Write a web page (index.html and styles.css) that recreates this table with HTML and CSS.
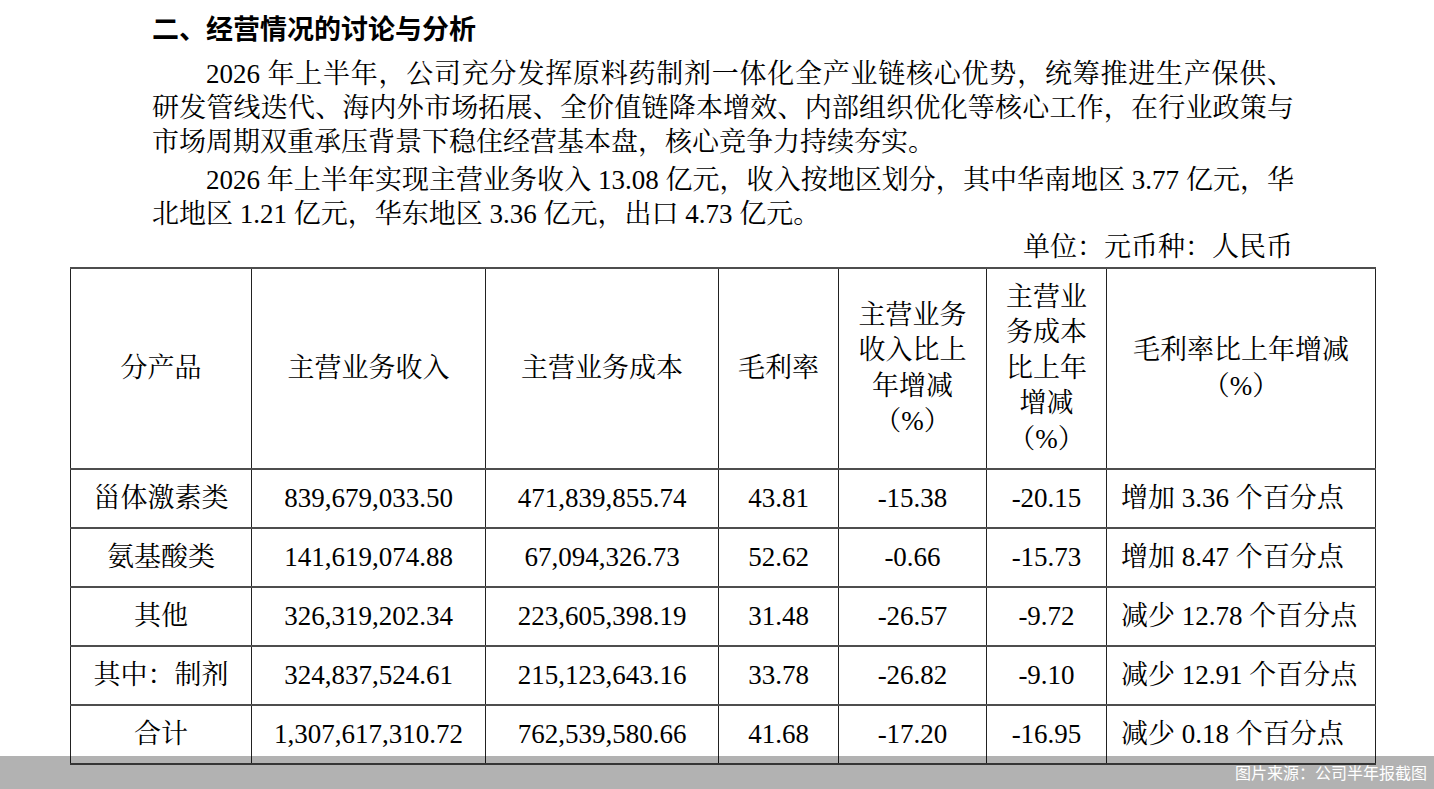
FILE: index.html
```html
<!DOCTYPE html>
<html lang="zh-CN">
<head>
<meta charset="utf-8">
<title>经营情况的讨论与分析</title>
<link rel="stylesheet" href="styles.css">
</head>
<body>
<div class="page">
  <h2 class="heading">二、经营情况的讨论与分析</h2>
  <div class="text">
    <div class="para">
      <div class="line first just">2026 年上半年，公司充分发挥原料药制剂一体化全产业链核心优势，统筹推进生产保供、</div>
      <div class="line just">研发管线迭代、海内外市场拓展、全价值链降本增效、内部组织优化等核心工作，在行业政策与</div>
      <div class="line">市场周期双重承压背景下稳住经营基本盘，核心竞争力持续夯实。</div>
    </div>
    <div class="para p2">
      <div class="line first just">2026 年上半年实现主营业务收入 13.08 亿元，收入按地区划分，其中华南地区 3.77 亿元，华</div>
      <div class="line">北地区 1.21 亿元，华东地区 3.36 亿元，出口 4.73 亿元。</div>
    </div>
    <div class="unit">单位：元币种：人民币</div>
  </div>
  <table class="data">
    <colgroup>
      <col class="c1"><col class="c2"><col class="c3"><col class="c4"><col class="c5"><col class="c6"><col class="c7">
    </colgroup>
    <tr class="head">
      <td>分产品</td>
      <td>主营业务收入</td>
      <td>主营业务成本</td>
      <td>毛利率</td>
      <td>主营业务<br>收入比上<br>年增减<br>（%）</td>
      <td>主营业<br>务成本<br>比上年<br>增减<br>（%）</td>
      <td>毛利率比上年增减<br>（%）</td>
    </tr>
    <tr>
      <td>甾体激素类</td><td>839,679,033.50</td><td>471,839,855.74</td><td>43.81</td><td>-15.38</td><td>-20.15</td><td class="left">增加 3.36 个百分点</td>
    </tr>
    <tr>
      <td>氨基酸类</td><td>141,619,074.88</td><td>67,094,326.73</td><td>52.62</td><td>-0.66</td><td>-15.73</td><td class="left">增加 8.47 个百分点</td>
    </tr>
    <tr>
      <td>其他</td><td>326,319,202.34</td><td>223,605,398.19</td><td>31.48</td><td>-26.57</td><td>-9.72</td><td class="left">减少 12.78 个百分点</td>
    </tr>
    <tr>
      <td>其中：制剂</td><td>324,837,524.61</td><td>215,123,643.16</td><td>33.78</td><td>-26.82</td><td>-9.10</td><td class="left">减少 12.91 个百分点</td>
    </tr>
    <tr>
      <td>合计</td><td>1,307,617,310.72</td><td>762,539,580.66</td><td>41.68</td><td>-17.20</td><td>-16.95</td><td class="left">减少 0.18 个百分点</td>
    </tr>
  </table>
</div>
<div class="source">图片来源：公司半年报截图</div>
</body>
</html>
```
FILE: styles.css
```css
html, body {
  margin: 0;
  padding: 0;
  background: #ffffff;
}

body {
  width: 1434px;
  height: 789px;
  overflow: hidden;
  position: relative;
  color: #000;
  font-family: "Liberation Serif", "Noto Serif CJK SC", "Noto Sans CJK SC", serif;
  font-size: 27px;
}

.page {
  padding-top: 13px;
}

.heading {
  margin: 0 0 10px 152px;
  font-size: 27px;
  line-height: 34px;
  font-weight: bold;
  font-family: "Liberation Serif", "Noto Sans CJK SC", sans-serif;
}

.text {
  margin-left: 152px;
  width: 1142px;
}

.line {
  line-height: 34px;
  height: 34px;
}

.line.first {
  text-indent: 54px;
}

.line.just {
  text-align: justify;
  text-align-last: justify;
}

.p2 {
  margin-top: 4px;
}

.unit {
  text-align: right;
  line-height: 33px;
  padding-right: 1px;
}

.data {
  margin: 3px 0 0 70px;
  border-collapse: collapse;
  table-layout: fixed;
  width: 1305px;
}

.c1 { width: 181px; }
.c2 { width: 234px; }
.c3 { width: 233px; }
.c4 { width: 120px; }
.c5 { width: 148px; }
.c6 { width: 120px; }
.c7 { width: 269px; }

.data td {
  border-top: 2px solid #4d4d4d;
  border-bottom: 2px solid #4d4d4d;
  border-left: 1.5px solid #222;
  border-right: 1.5px solid #222;
  padding: 0 6px;
  text-align: center;
  vertical-align: middle;
  height: 57px;
  line-height: 35px;
  white-space: nowrap;
}

.data tr.head td {
  height: 199px;
  line-height: 35.5px;
}

.data td.left {
  text-align: left;
  padding-left: 14px;
}

.source {
  position: absolute;
  left: 0;
  right: 0;
  bottom: 0;
  height: 33px;
  background: rgba(0, 0, 0, 0.3);
  color: #ffffff;
  font-family: "Noto Sans CJK SC", "Noto Sans", sans-serif;
  font-size: 16px;
  line-height: 33px;
  text-align: right;
  padding-right: 7px;
}
```
